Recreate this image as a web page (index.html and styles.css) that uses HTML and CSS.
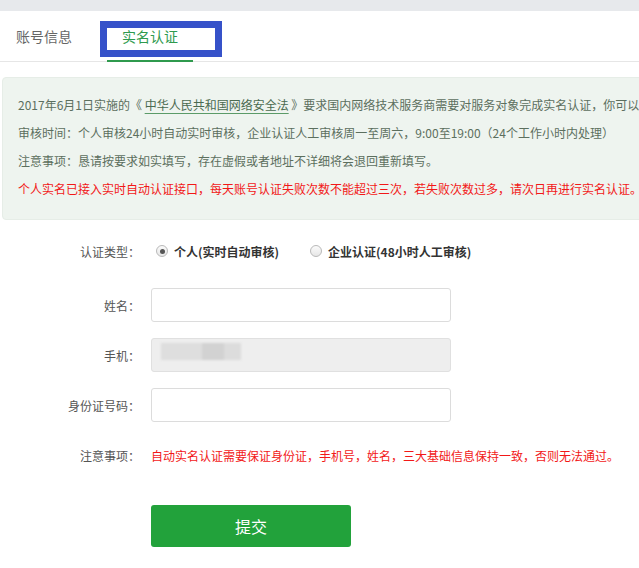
FILE: index.html
```html
<!DOCTYPE html>
<html lang="zh-CN">
<head>
<meta charset="utf-8">
<title>实名认证</title>
<link rel="stylesheet" href="styles.css">
</head>
<body>
<div class="page">
  <div class="topbar"></div>
  <div class="tabs">
    <div class="tab">账号信息</div>
    <div class="tab active">实名认证</div>
    <div class="highlight"></div>
  </div>

  <div class="notice">
    <p>2017年6月1日实施的《 <a class="law">中华人民共和国网络安全法</a> 》要求国内网络技术服务商需要对服务对象完成实名认证，你可以通过以下方式完成实名认证。</p>
    <p>审核时间：个人审核24小时自动实时审核，企业认证人工审核周一至周六，9:00至19:00（24个工作小时内处理）</p>
    <p>注意事项：恳请按要求如实填写，存在虚假或者地址不详细将会退回重新填写。</p>
    <p class="red">个人实名已接入实时自动认证接口，每天账号认证失败次数不能超过三次，若失败次数过多，请次日再进行实名认证。</p>
  </div>

  <div class="form">
    <div class="row radio-row">
      <div class="label">认证类型：</div>
      <div class="field radios">
        <span class="radio checked"></span><span class="radio-text">个人(实时自动审核)</span>
        <span class="radio second"></span><span class="radio-text">企业认证(48小时人工审核)</span>
      </div>
    </div>
    <div class="row">
      <div class="label">姓名：</div>
      <div class="input"></div>
    </div>
    <div class="row">
      <div class="label">手机：</div>
      <div class="input disabled"><span class="blur"></span></div>
    </div>
    <div class="row">
      <div class="label">身份证号码：</div>
      <div class="input"></div>
    </div>
    <div class="row">
      <div class="label">注意事项：</div>
      <div class="field red">自动实名认证需要保证身份证，手机号，姓名，三大基础信息保持一致，否则无法通过。</div>
    </div>
    <div class="actions">
      <button class="submit">提交</button>
    </div>
  </div>
</div>
</body>
</html>
```
FILE: styles.css
```css
html, body {
  margin: 0;
  padding: 0;
  background: #fff;
  overflow: hidden;
}
body {
  font-family: "Noto Sans CJK SC", "Noto Sans", sans-serif;
  font-size: 12px;
  color: #555;
}
.page {
  width: 780px;
}
.topbar {
  height: 11px;
  background: #e7e9ec;
}
.tabs {
  position: relative;
  display: flex;
  height: 51px;
  padding-left: 16px;
  box-shadow: inset 0 -1px 0 #e6e6e6;
}
.tab {
  font-size: 14px;
  line-height: 50px;
  color: #666;
  height: 49px;
}
.tab.active {
  margin-left: 35px;
  padding: 0 15px;
  color: #2f9a4e;
  border-bottom: 2px solid #2f9a4e;
}
.highlight {
  position: absolute;
  left: 100px;
  top: 10px;
  width: 122px;
  height: 36px;
  box-sizing: border-box;
  border: 7px solid #3652c9;
}
.notice {
  margin: 15px 0 0 2px;
  padding: 13px 15px 16px;
  background: #eef4ef;
  border: 1px solid #e6ede7;
  border-radius: 4px;
  color: #5c6f5e;
  white-space: nowrap;
}
.notice p {
  margin: 0;
  line-height: 28px;
}
.law {
  color: #4a6a50;
  text-decoration: underline;
  text-decoration-color: #5b9b68;
  text-underline-offset: 3px;
}
.red {
  color: #f21818;
}
.form {
  padding-top: 14px;
}
.row {
  display: flex;
  align-items: center;
  height: 34px;
  margin-bottom: 16px;
}
.radio-row {
  margin-bottom: 20px;
}
.label {
  width: 140px;
  text-align: right;
  color: #555;
  flex: none;
}
.field {
  margin-left: 11px;
  white-space: nowrap;
}
.radios {
  display: flex;
  align-items: center;
}
.radio {
  width: 12px;
  height: 12px;
  box-sizing: border-box;
  border: 1px solid #b9b9b9;
  border-radius: 50%;
  background: linear-gradient(#fbfbfb, #e6e6e6);
  margin-left: 5px;
  position: relative;
}
.radio.checked::after {
  content: "";
  position: absolute;
  left: 2.5px;
  top: 2.5px;
  width: 5px;
  height: 5px;
  border-radius: 50%;
  background: #555;
}
.radio.second {
  margin-left: 31px;
}
.radio-text {
  margin-left: 6px;
  font-weight: bold;
  color: #333;
}
.input {
  margin-left: 11px;
  width: 300px;
  height: 34px;
  box-sizing: border-box;
  border: 1px solid #dcdcdc;
  border-radius: 3px;
  background: #fff;
  position: relative;
}
.input.disabled {
  background: #eeeeee;
  border-color: #e0e0e0;
}
.blur {
  display: block;
  margin: 4px 0 0 9px;
  width: 80px;
  height: 17px;
  background: linear-gradient(90deg, #dedede 0, #dedede 40px, #d2d2d2 42px, #d2d2d2 62px, #dcdcdc 64px, #dcdcdc 80px);
  filter: blur(1px);
}
.actions {
  padding-left: 151px;
  padding-top: 17px;
}
.submit {
  display: block;
  width: 200px;
  height: 42px;
  border: 0;
  border-radius: 3px;
  background: #22a23b;
  color: #fff;
  font-family: inherit;
  font-size: 16px;
  padding: 0;
}
```
